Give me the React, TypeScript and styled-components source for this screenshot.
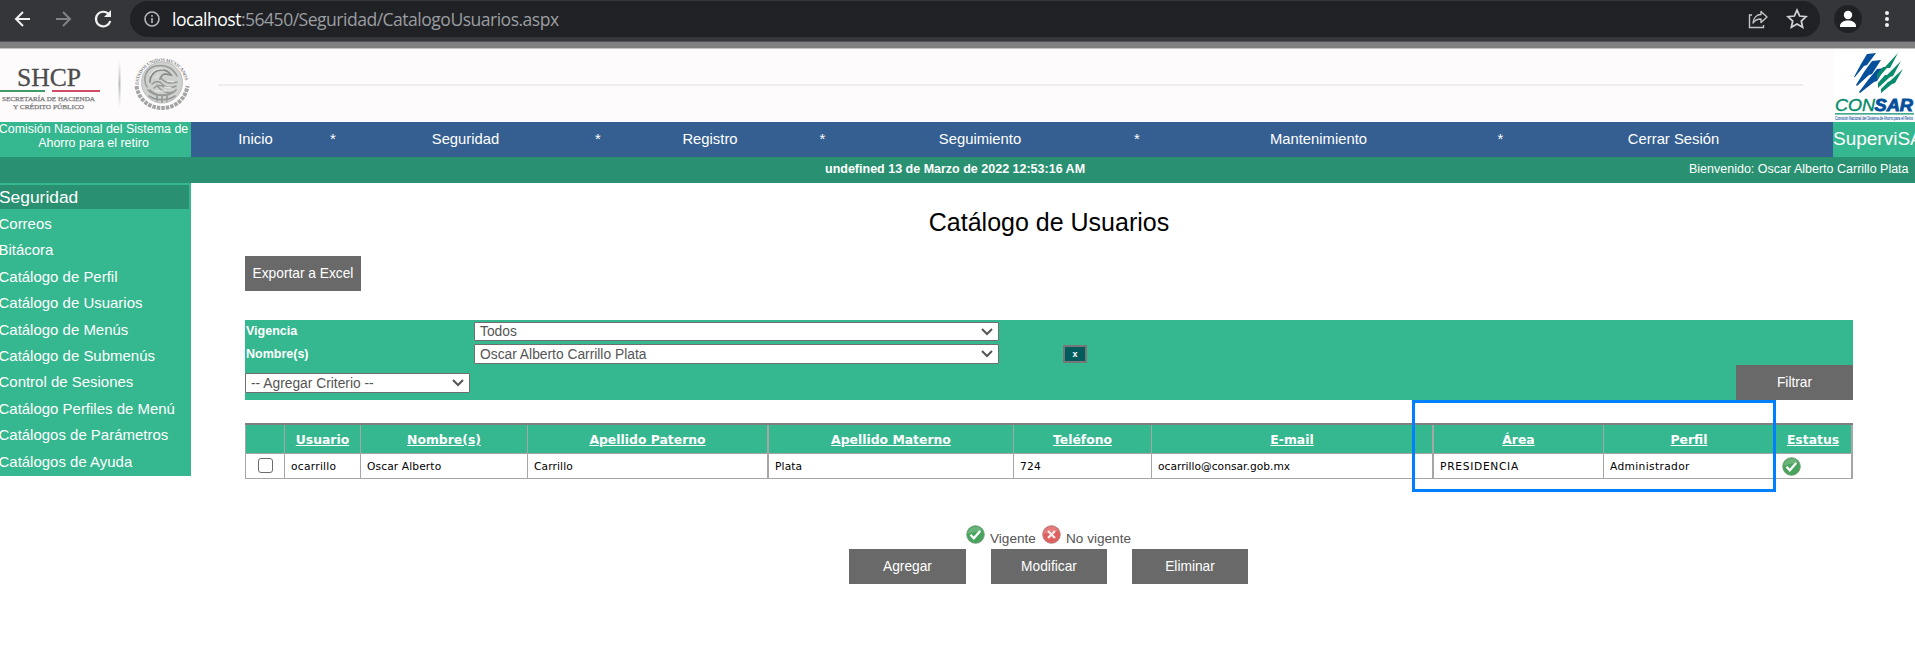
import React from "react";
import styled, { createGlobalStyle } from "styled-components";

const sans = `"Liberation Sans", Arial, sans-serif`;
const wide = `"DejaVu Sans", Verdana, sans-serif`;
const green = "#35b78f";
const deepGreen = "#299171";

const Global = createGlobalStyle`
  *{box-sizing:border-box}
  body{margin:0;background:#fff;font-family:${sans};overflow:hidden}
`;

const Page = styled.div`width:1915px;height:645px;overflow:hidden;background:#fff;display:flex;flex-direction:column;`;
const BrowserBar = styled.div`flex:none;height:42px;background:#35363a;border-bottom:1px solid #55565b;display:flex;align-items:center;padding-left:13px;padding-bottom:4px;`;
const NavIcon = styled.svg`width:20px;height:20px;flex:none;margin-right:20px;`;
const Address = styled.div`width:1690px;height:36px;border-radius:18px;background:#202124;display:flex;align-items:center;padding:0 12px 0 13px;margin-left:-3px;`;
const Url = styled.div`font:17.6px "Open Sans","Noto Sans",sans-serif;color:#9a9da1;margin-left:11px;flex:1;letter-spacing:-.53px;white-space:nowrap;b{font-weight:400;color:#fff}`;
const StarIcon = styled.svg`width:22px;height:22px;margin-left:18px;`;
const Avatar = styled.div`width:28px;height:28px;border-radius:50%;background:#202124;margin:0 16px 0 14px;display:flex;`;
const Strip = styled.div`flex:none;height:7px;background:#808080;border-bottom:1px solid #c4c4c4;`;
const Banner = styled.header`flex:none;height:73px;background:#fdfbfc;display:flex;`;
const BannerRule = styled.div`width:1585px;height:2px;margin:35px 32px 0 18px;background:#eeecee;`;
const Menu = styled.nav`flex:none;height:35px;background:#365f91;display:flex;color:#fff;`;
const Agency = styled.div`width:191px;background:${green};font-size:12.45px;line-height:14px;height:35px;display:flex;flex-direction:column;align-items:center;white-space:nowrap;padding-right:4px;`;
const AgencyLine = styled.span`height:14px;`;
const MenuItem = styled.div<{ $w: number }>`width:${p => p.$w}px;text-align:center;font-size:14.8px;line-height:35px;`;
const Brand = styled.div`width:82px;background:${green};font-size:19px;line-height:33px;overflow:hidden;white-space:nowrap;`;
const InfoBar = styled.div`flex:none;height:26px;background:${deepGreen};color:#fff;display:flex;font-size:12.5px;line-height:24px;white-space:nowrap;`;
const Clock = styled.div`margin-left:825px;width:864px;font-weight:700;`;
const Body = styled.div`display:flex;`;
const Side = styled.aside`width:191px;height:293px;background:${green};color:#fff;padding-top:2px;`;
const SideTitle = styled.div`width:189px;height:24px;background:${deepGreen};font-size:17.4px;line-height:24px;text-indent:-1px;margin-bottom:2px;`;
const SideLink = styled.div`height:26.4px;font-size:14.97px;line-height:26px;text-indent:-1.5px;white-space:nowrap;`;
const Main = styled.main`width:1608px;margin-left:54px;position:relative;`;
const Title = styled.h1`margin:0;height:73px;padding-top:24px;font-size:25px;line-height:30px;font-weight:400;text-align:center;color:#000;`;
const Button = styled.button<{ $w?: number }>`border:0;padding:0;width:${p => p.$w || 116}px;height:35px;background:#696969;color:#fff;font:13.75px ${sans};display:block;line-height:34px;flex:none;`;
const Filter = styled.section`margin-top:29px;height:80px;background:${green};display:grid;grid-template-columns:229px 588px 1fr 117px;grid-template-rows:23px 22px 35px;color:#fff;`;
const Label = styled.div`font-size:12.5px;font-weight:700;padding:4px 0 0 1px;line-height:15px;`;
const Select = styled.div<{ $w: number; $h: number; $t: number }>`width:${p => p.$w}px;height:${p => p.$h}px;margin-top:${p => p.$t}px;border:1px solid #6f6f6f;border-radius:1px;background:#fff;color:#555;font-size:13.8px;line-height:${p => p.$h - 3}px;padding:0 5px;display:flex;justify-content:space-between;align-items:center;white-space:nowrap;`;
const Remove = styled.button`width:24px;height:18px;margin:2px 0 0 1px;border:2px solid #767676;background:#005c5c;color:#fff;padding:0;font:bold 9px ${sans};line-height:12px;`;
const Table = styled.table`margin-top:23px;width:1608px;height:56px;table-layout:fixed;border-spacing:0;font-family:${wide};border-top:2px solid #808080;`;
const Th = styled.th<{ $b: number }>`height:28px;padding:1px 0 0;background:${green};color:#fff;font-size:12.4px;text-decoration:underline;border-left:${p => p.$b}px solid #a6a6a6;&:last-child{border-right:2px solid #a6a6a6}`;
const Td = styled.td<{ $b: number; $track: number }>`height:26px;padding:2px 0 0 6px;font-size:10.67px;line-height:12px;letter-spacing:${p => p.$track}px;color:#000;border:solid #a6a6a6;border-width:1px 0 1px ${p => p.$b}px;white-space:nowrap;&:last-child{border-right-width:2px;padding:0 0 0 7px}`;
const Check = styled.div`width:15px;height:15px;border:1px solid #6c6c6c;border-radius:3px;margin-left:6px;margin-top:-3px;`;
const Highlight = styled.div`position:absolute;left:1167px;top:217px;width:364px;height:92px;border:3px solid #0080ff;`;
const Legend = styled.div`margin-top:46px;height:24px;margin-left:721px;display:flex;font-size:13.6px;color:#555;line-height:28px;white-space:nowrap;`;
const Actions = styled.div`display:flex;margin-left:604px;gap:25px;`;
const Entry = styled.span<{ $w: number }>`width:${p => p.$w}px;padding-left:5px;`;
const StatusIcon = styled.svg`width:19px;height:19px;display:block;flex:none;`;

const Chevron = () => <svg width="12" height="8" viewBox="0 0 12 8"><path d="M1 1l5 5 5-5" fill="none" stroke="#555" strokeWidth="2" /></svg>;
const Status = ({ ok }: { ok?: boolean }) => (
  <StatusIcon viewBox="0 0 19 19">
    <circle cx="9.5" cy="9.5" r="8.8" fill={ok ? "#48a45c" : "#e0605f"} stroke={ok ? "#6f9a78" : "#b08080"} strokeWidth=".9" />
    <path d="M1.5 9a8 8 0 0 1 15-3Q9 6 1.5 9z" fill="#fff" opacity=".18" />
    {ok ? <path d="M4.5 9.8l3.3 3.4 6.4-7.3" fill="none" stroke="#fff" strokeWidth="2.3" /> : <path d="M6 6l7 7M13 6l-7 7" stroke="#f6eeee" strokeWidth="2.3" />}
  </StatusIcon>
);

const ShcpLogo = () => (
  <svg width="200" height="73" viewBox="0 0 200 73" fontFamily="Liberation Serif, serif">
    <defs>
      <linearGradient id="fade" x1="0" y1="0" x2="0" y2="1"><stop offset="0" stopColor="#ccc" stopOpacity="0" /><stop offset=".5" stopColor="#b8b8b8" /><stop offset="1" stopColor="#ccc" stopOpacity="0" /></linearGradient>
      <path id="arc" d="M138.500 36A23.500 23.500 0 0 1 185.500 36" />
    </defs>
    <text x="17" y="36.700" fontSize="24.400" fill="#4c4c4c" stroke="#4c4c4c" strokeWidth=".3" textLength="64" lengthAdjust="spacingAndGlyphs">SHCP</text>
    <path d="M0 42h45" stroke="#3f9c66" strokeWidth="1.800" />
    <path d="M52 42h48" stroke="#d04c68" strokeWidth="1.800" />
    <g fontSize="6.800" fill="#707070" stroke="#808080" strokeWidth=".25">
      <text x="2" y="51.500" textLength="93" lengthAdjust="spacingAndGlyphs">SECRETARÍA DE HACIENDA</text>
      <text x="13" y="59.700" textLength="71" lengthAdjust="spacingAndGlyphs">Y CRÉDITO PÚBLICO</text>
    </g>
    <rect x="118.500" y="10" width="2" height="50" fill="url(#fade)" />
    <text fontSize="4.900" fill="#858585" fontWeight="bold" letterSpacing="-.25"><textPath href="#arc">ESTADOS UNIDOS MEXICANOS</textPath></text>
    <circle cx="162" cy="33.500" r="20.500" fill="#cfd1cf" stroke="#bcbdbc" />
    <g fill="none" stroke="#989a98" strokeLinecap="round">
      <path d="M136.500 37c2 13 12 22 25.500 22s23.500-9 25.500-22" strokeWidth="4" stroke="#a3a5a3" strokeLinecap="butt" strokeDasharray="3.500 1" />
      <path d="M147 38c-5-9-1-19 9-21 9-2 17 2 21 10" strokeWidth="1.500" />
      <path d="M150 33c0-7 5-12 12-12 4 0 7 2 9 5l-5-1c-3 0-5 2-6 5" strokeWidth="1.700" stroke="#858785" />
      <path d="M152 35c3-3 6-3 9-1m-7 5c3-3 7-3 10-1m-3-9c4 5 10 6 16 4m-17 0c4 5 10 7 16 4m-19-1c3 6 10 9 16 7m-23-2c4 5 12 7 19 4" strokeWidth="1.500" />
      <path d="M148 41c4 5 9 5 14 5s10 0 14-5M149 47c7 5 19 5 26 0M157 46v6m5-6v7m5-7v6" strokeWidth="1.700" />
    </g>
    <path d="M150 27c2-5 7-8 13-7m-8 9l4-3m8 6l7 1m-10 5l8 1m-17 3h12" stroke="#ececec" strokeWidth="1" fill="none" />
  </svg>
);

const ConsarLogo = () => (
  <svg width="80" height="73" viewBox="0 0 80 73">
    <rect width="80" height="73" fill="#fff" />
    <g fill="#064f9b"><path d="M32 5l9-1-9 12-3 1-9 11-1 0 7-13z" /><path d="M37 12l9-1-9 14-3 1-12 11-1-1 8-13z" /><path d="M42 20l8-1-8 13-3 1-14 11-1-1 9-12z" /></g>
    <g fill="#078b6b"><path d="M63 4l-8 15-3 0-10 11v-5l6-7 2 0z" /><path d="M66 12l-8 15-3 1-12 11v-5l7-8 2 0z" /><path d="M68 20l-8 14-3 1-11 9v-4l7-7 2-1z" /></g>
    <g fontFamily="Liberation Sans" fontStyle="italic" fontSize="17.400"><text x="0" y="61.800" fill="#078b6b" stroke="#078b6b" strokeWidth=".4" textLength="40" lengthAdjust="spacingAndGlyphs">CON</text><text x="39.500" y="61.800" fill="#064f9b" stroke="#064f9b" strokeWidth=".9" fontWeight="bold" textLength="38.500" lengthAdjust="spacingAndGlyphs">SAR</text></g>
    <path d="M0 64.800h79" stroke="#078b6b" strokeWidth="1.300" />
    <text x="0" y="70.600" fontFamily="Liberation Sans" fontSize="5.500" fill="#2f68a8" stroke="#2f68a8" strokeWidth=".15" textLength="78" lengthAdjust="spacingAndGlyphs">Comisión Nacional del Sistema de Ahorro para el Retiro</text>
  </svg>
);

const menu: [string, number][] = [["Inicio", 129], ["*", 26], ["Seguridad", 239], ["*", 26], ["Registro", 198], ["*", 27], ["Seguimiento", 288], ["*", 26], ["Mantenimiento", 337], ["*", 27], ["Cerrar Sesión", 319]];
const links = ["Correos", "Bitácora", "Catálogo de Perfil", "Catálogo de Usuarios", "Catálogo de Menús", "Catálogo de Submenús", "Control de Sesiones", "Catálogo Perfiles de Menú", "Catálogos de Parámetros", "Catálogos de Ayuda"];
const columns: { name: string; width: number; edge: number; value: React.ReactNode; track?: number }[] = [
  { name: "", width: 39, edge: 1, value: <Check /> },
  { name: "Usuario", width: 76, edge: 1, value: "ocarrillo", track: 0.28 },
  { name: "Nombre(s)", width: 167, edge: 1, value: "Oscar Alberto", track: 0.12 },
  { name: "Apellido Paterno", width: 240, edge: 1, value: "Carrillo", track: 0.12 },
  { name: "Apellido Materno", width: 246, edge: 2, value: "Plata", track: 0.12 },
  { name: "Teléfono", width: 138, edge: 1, value: "724", track: 0.2 },
  { name: "E-mail", width: 281, edge: 1, value: "ocarrillo@consar.gob.mx", track: 0.02 },
  { name: "Área", width: 171, edge: 2, value: "PRESIDENCIA", track: 0.7 },
  { name: "Perfil", width: 171, edge: 1, value: "Administrador", track: 0.35 },
  { name: "Estatus", width: 79, edge: 1, value: <Status ok /> },
];

export default function App() {
  return (
    <Page>
      <Global />
      <BrowserBar>
        <NavIcon viewBox="0 0 20 20" fill="none" stroke="#f1f1f1" strokeWidth="2"><path d="M17 10H3M10 3l-7 7 7 7" /></NavIcon>
        <NavIcon viewBox="0 0 20 20" fill="none" stroke="#828387" strokeWidth="2"><path d="M3 10h14M10 3l7 7-7 7" /></NavIcon>
        <NavIcon viewBox="0 0 20 20" fill="none" stroke="#f1f1f1" strokeWidth="2.200"><path d="M16 5.500A7.300 7.300 0 1 0 17.300 12" /><path d="M18 1v7h-7z" fill="#f1f1f1" stroke="none" /></NavIcon>
        <Address>
          <svg width="18" height="18" viewBox="0 0 18 18" fill="none" stroke="#b5b7ba" strokeWidth="1.600"><circle cx="9" cy="9" r="7" /><path d="M9 8v5M9 5v1.800" /></svg>
          <Url><b>localhost</b>:56450/Seguridad/CatalogoUsuarios.aspx</Url>
          <svg width="20" height="20" viewBox="0 0 20 20" fill="none" stroke="#c4c5c7" strokeWidth="1.400"><path d="M4 6H1.500v12.500h14V16" /><path d="M5 14c.5-5.500 4-8.500 8-8.500V2.500L19 8l-6 5.500V10c-3.500 0-6 1-8 4z" strokeLinejoin="round" /></svg>
          <StarIcon viewBox="0 0 20 20" fill="none" stroke="#d0d1d3" strokeWidth="1.600"><path d="M10 2l2.400 5.300 5.800.6-4.300 3.900 1.200 5.700-5.100-2.900-5.100 2.900 1.200-5.700-4.300-3.900 5.800-.6z" /></StarIcon>
        </Address>
        <Avatar><svg width="28" height="28" viewBox="0 0 28 28" fill="#fff"><circle cx="14" cy="10" r="4.200" /><path d="M6 21c0-7.500 16-7.500 16 0v1H6z" /></svg></Avatar>
        <svg width="18" height="20" viewBox="0 0 18 20" fill="#f1f1f1"><circle cx="9" cy="4" r="2" /><circle cx="9" cy="10" r="2" /><circle cx="9" cy="16" r="2" /></svg>
      </BrowserBar>
      <Strip />
      <Banner><ShcpLogo /><BannerRule /><ConsarLogo /></Banner>
      <Menu>
        <Agency><AgencyLine>Comisión Nacional del Sistema de</AgencyLine><AgencyLine>Ahorro para el retiro</AgencyLine></Agency>
        {menu.map(([t, w], i) => <MenuItem key={i} $w={w}>{t}</MenuItem>)}
        <Brand>SuperviSAR</Brand>
      </Menu>
      <InfoBar><Clock>undefined 13 de Marzo de 2022 12:53:16 AM</Clock><span>Bienvenido: Oscar Alberto Carrillo Plata</span></InfoBar>
      <Body>
        <Side><SideTitle>Seguridad</SideTitle>{links.map(l => <SideLink key={l}>{l}</SideLink>)}</Side>
        <Main>
          <Title>Catálogo de Usuarios</Title>
          <Button>Exportar a Excel</Button>
          <Filter>
            <Label>Vigencia</Label><Select $w={525} $h={19} $t={2}>Todos<Chevron /></Select><span /><span />
            <Label>Nombre(s)</Label><Select $w={525} $h={20} $t={1}>Oscar Alberto Carrillo Plata<Chevron /></Select><Remove>x</Remove><span />
            <Select $w={225} $h={20} $t={8}>-- Agregar Criterio --<Chevron /></Select><span /><span /><Button $w={117}>Filtrar</Button>
          </Filter>
          <Table>
            <colgroup>{columns.map(c => <col key={c.name} width={c.width} />)}</colgroup>
            <thead><tr>{columns.map(c => <Th key={c.name} $b={c.edge}>{c.name}</Th>)}</tr></thead>
            <tbody><tr>{columns.map(c => <Td key={c.name} $b={c.edge} $track={c.track || 0}>{c.value}</Td>)}</tr></tbody>
          </Table>
          <Legend><Status ok /><Entry $w={57}>Vigente</Entry><Status /><Entry $w={80}>No vigente</Entry></Legend>
          <Actions><Button $w={117}>Agregar</Button><Button>Modificar</Button><Button>Eliminar</Button></Actions>
          <Highlight />
        </Main>
      </Body>
    </Page>
  );
}
